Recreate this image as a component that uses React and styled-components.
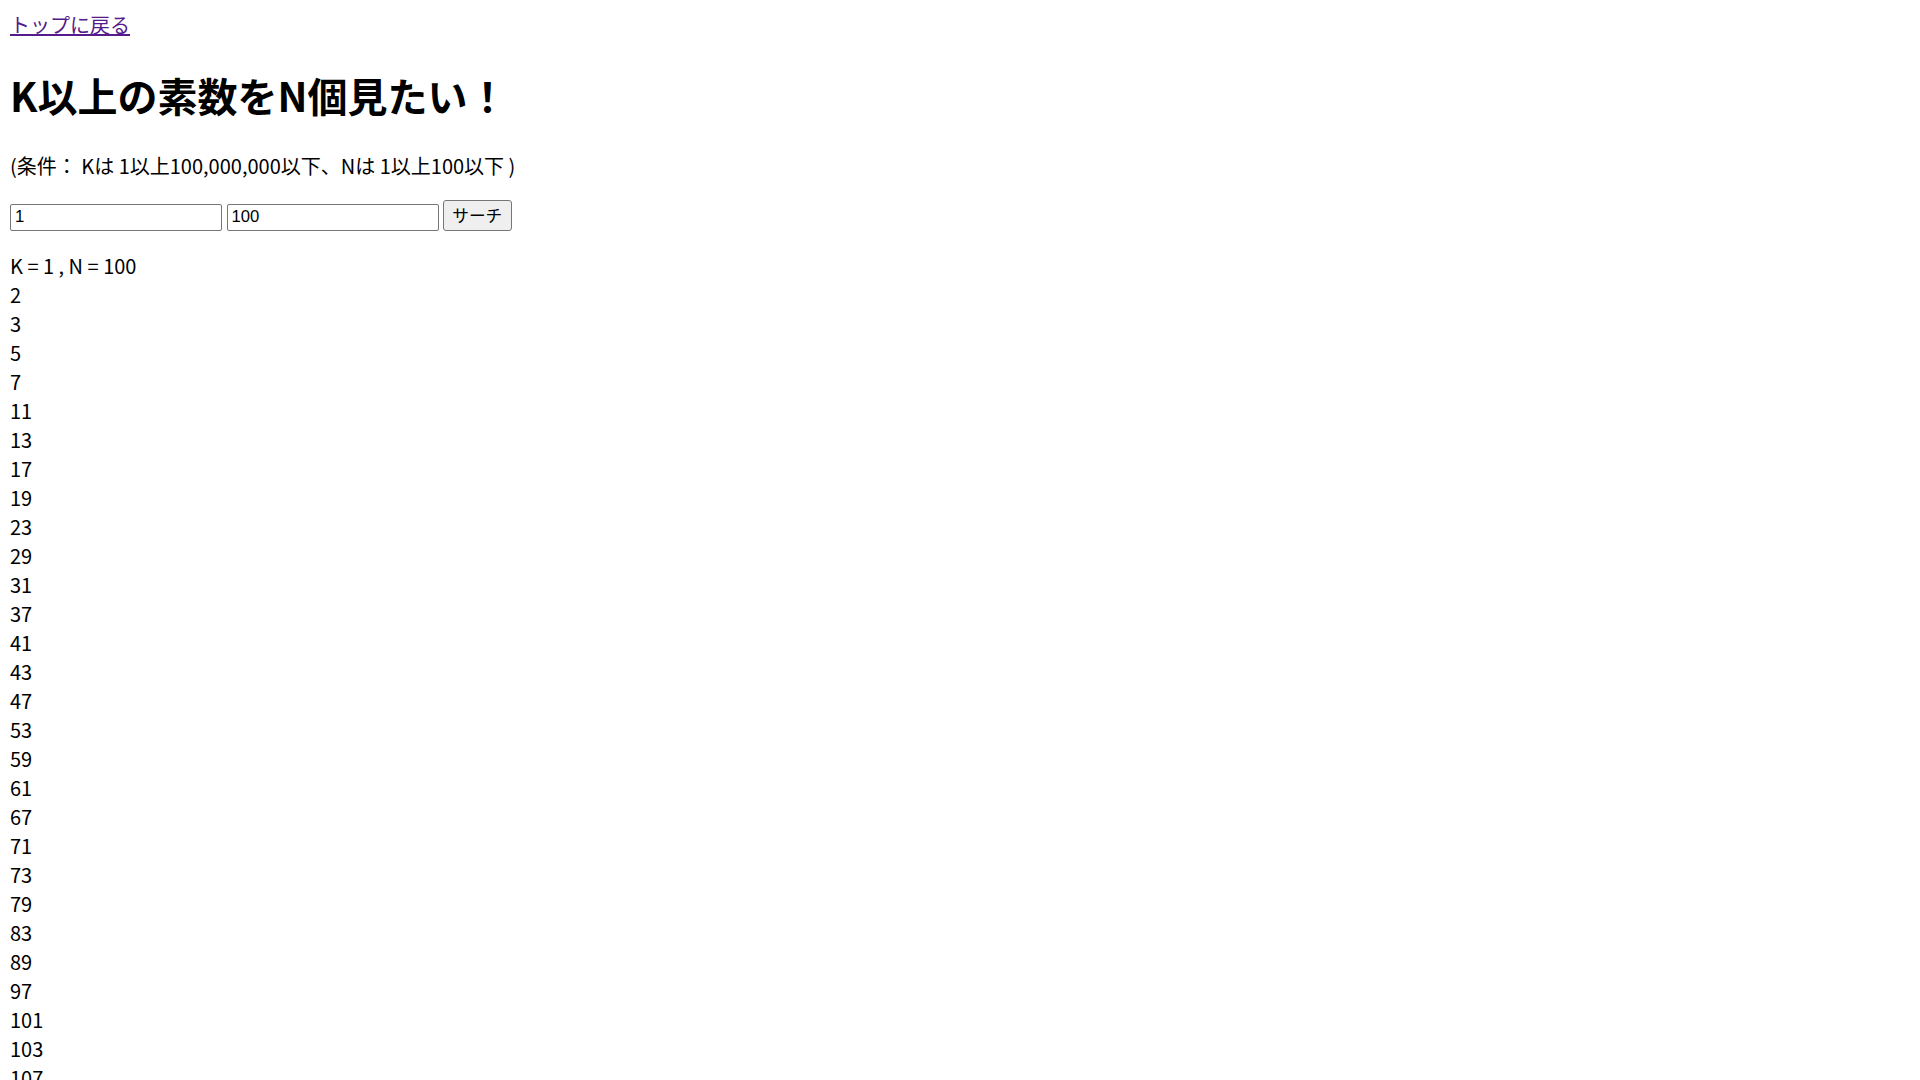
import styled, { createGlobalStyle } from "styled-components";

const GlobalStyle = createGlobalStyle`
    html, body {
        margin: 0;
        padding: 0;
        background: #ffffff;
    }
    body {
        margin: 10px;
        font-family: "Noto Sans CJK JP", "Noto Sans", sans-serif;
        font-size: 20px;
        color: #000000;
    }
    ::-webkit-scrollbar {
        width: 20px;
        background: #f8f8f8;
    }
    ::-webkit-scrollbar-thumb {
        background: #8b8b8b;
        border: 4px solid transparent;
        border-left-width: 5px;
        background-clip: padding-box;
        border-radius: 10px;
    }
    ::-webkit-scrollbar-button:single-button {
        height: 20px;
        background-color: #f8f8f8;
        background-repeat: no-repeat;
        background-size: 6px 5px;
    }
    ::-webkit-scrollbar-button:single-button:vertical:decrement {
        background-image:
            linear-gradient(to bottom right, transparent 50%, #a3a3a3 50%),
            linear-gradient(to bottom left, transparent 50%, #a3a3a3 50%);
        background-position: 4px 7px, 10px 7px;
    }
    ::-webkit-scrollbar-button:single-button:vertical:increment {
        background-image:
            linear-gradient(to top right, transparent 50%, #a3a3a3 50%),
            linear-gradient(to top left, transparent 50%, #a3a3a3 50%);
        background-position: 4px 8px, 10px 8px;
    }
`;

function primesFrom(k, n) {
    const out = [];
    let x = Math.max(2, k);
    while (out.length < n) {
        let ok = true;
        for (let d = 2; d * d <= x; d++) {
            if (x % d === 0) { ok = false; break; }
        }
        if (ok) out.push(x);
        x++;
    }
    return out;
}

export default function App() {
    const k = 1;
    const n = 100;
    const primes = primesFrom(k, n);

    return (
        <>
            <GlobalStyle />
            <BackLink href="#">トップに戻る</BackLink>
            <Title>K以上の素数をN個見たい！</Title>
            <Note>(条件： Kは 1以上100,000,000以下、Nは 1以上100以下 )</Note>
            <SearchForm onSubmit={(e) => e.preventDefault()}>
                <Field type="text" defaultValue="1" />
                <Field type="text" defaultValue="100" />
                <SearchButton type="submit">サーチ</SearchButton>
            </SearchForm>
            <Results>
                <Line>K = {k} , N = {n}</Line>
                {primes.map((p) => (
                    <Line key={p}>{p}</Line>
                ))}
            </Results>
        </>
    );
}

const BackLink = styled.a`
    display: inline-block;
    font-size: 20px;
    line-height: 29px;
    color: #551a8b;
    text-decoration: underline;
    text-decoration-thickness: 2px;
`;

const Title = styled.h1`
    font-size: 40px;
    font-weight: 700;
    line-height: 58px;
    margin: 26.8px 0;
`;

const Note = styled.p`
    font-size: 20px;
    line-height: 29px;
    margin: 20px 0;
`;

const SearchForm = styled.form`
    display: flex;
    align-items: flex-end;
    gap: 4.5px;
    margin: 20.5px 0;
    height: 30.5px;
`;

const Field = styled.input`
    box-sizing: border-box;
    width: 212px;
    height: 27px;
    padding: 1px 4px;
    border: 1px solid #767676;
    border-radius: 2px;
    font-family: "Liberation Sans", Arial, sans-serif;
    font-size: 16.7px;
    color: #000000;
    background: #ffffff;
    outline: none;
`;

const SearchButton = styled.button`
    box-sizing: border-box;
    width: 68.5px;
    height: 30.5px;
    padding: 0;
    border: 1px solid #767676;
    border-radius: 3px;
    background: #efefef;
    font-family: "Noto Sans CJK JP", sans-serif;
    font-size: 16.7px;
    color: #000000;
`;

const Results = styled.div`
    font-size: 20px;
    line-height: 29px;
`;

const Line = styled.div``;
